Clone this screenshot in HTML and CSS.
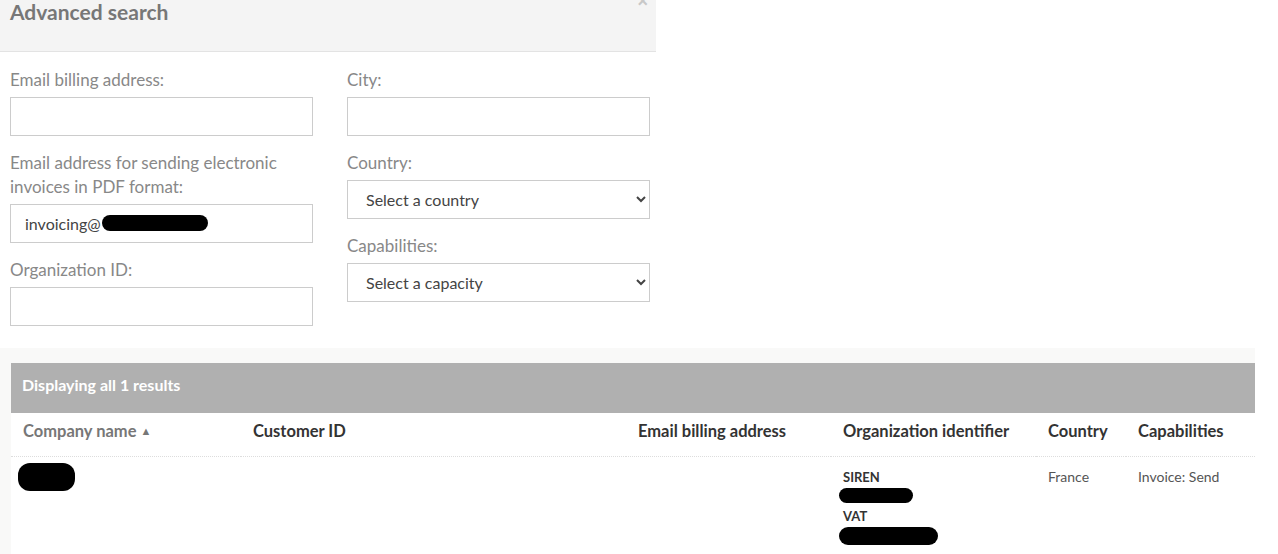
FILE: index.html
```html
<!DOCTYPE html>
<html lang="en">
<head>
    <meta charset="UTF-8">
    <meta name="viewport" content="width=device-width, initial-scale=1.0">
    <title>Advanced search</title>
    <link rel="stylesheet" href="styles.css">
</head>
<body>
    <div class="modal">
        <div class="modal-header">
            <h3>Advanced search</h3>
            <button class="close">&times;</button>
        </div>
        <div class="modal-body">
            <div class="col">
                <div class="form-group">
                    <label for="email-billing">Email billing address:</label>
                    <input type="text" id="email-billing">
                </div>
                <div class="form-group">
                    <label for="email-pdf">Email address for sending electronic invoices in PDF format:</label>
                    <div class="input-wrap">
                        <input type="text" id="email-pdf" value="invoicing@">
                        <span class="redact redact-input"></span>
                    </div>
                </div>
                <div class="form-group">
                    <label for="org-id">Organization ID:</label>
                    <input type="text" id="org-id">
                </div>
            </div>
            <div class="col">
                <div class="form-group">
                    <label for="city">City:</label>
                    <input type="text" id="city">
                </div>
                <div class="form-group">
                    <label for="country">Country:</label>
                    <select id="country">
                        <option>Select a country</option>
                    </select>
                </div>
                <div class="form-group">
                    <label for="capability">Capabilities:</label>
                    <select id="capability">
                        <option>Select a capacity</option>
                    </select>
                </div>
            </div>
        </div>
    </div>

    <div class="results">
        <div class="results-box">
            <div class="results-title">Displaying all 1 results</div>
            <table class="table">
                <thead>
                    <tr>
                        <th class="sorted c-name">Company name <span class="caret">&#9650;</span></th>
                        <th class="c-id">Customer ID</th>
                        <th class="c-email">Email billing address</th>
                        <th class="c-org">Organization identifier</th>
                        <th class="c-country">Country</th>
                        <th class="c-cap">Capabilities</th>
                    </tr>
                </thead>
                <tbody>
                    <tr>
                        <td><span class="redact redact-name"></span></td>
                        <td></td>
                        <td></td>
                        <td>
                            <div class="id-type">SIREN</div>
                            <span class="redact redact-siren"></span>
                            <div class="id-type">VAT</div>
                            <span class="redact redact-vat"></span>
                        </td>
                        <td>France</td>
                        <td>Invoice: Send</td>
                    </tr>
                </tbody>
            </table>
        </div>
    </div>
</body>
</html>
```

FILE: styles.css
```css
body {
    margin: 0;
    font-family: Lato, "Open Sans", sans-serif;
    color: #333;
    background: #fff;
}
.modal {
    width: 656px;
}
.modal-header {
    position: relative;
    height: 52px;
    background-color: #f4f4f4;
    border-bottom: 1px solid #e3e3e3;
    box-sizing: border-box;
}
.modal-header h3 {
    margin: 0;
    padding: 0 0 0 10px;
    font-size: 21px;
    font-weight: bold;
    color: #777;
    line-height: 24px;
}
.close {
    position: absolute;
    top: -9px;
    right: 8px;
    border: none;
    background: none;
    padding: 0;
    font-size: 18px;
    font-weight: bold;
    color: #c8c8c8;
}
.modal-body {
    display: flex;
    gap: 34px;
    padding: 16px 6px 22px 10px;
}
.col {
    width: 303px;
}
.form-group {
    margin-bottom: 15px;
}
.form-group:last-child {
    margin-bottom: 0;
}
.form-group label {
    display: block;
    font-size: 17px;
    line-height: 24px;
    color: #888;
    margin-bottom: 5px;
}
.form-group input, .form-group select {
    width: 100%;
    height: 39px;
    padding: 0 14px;
    box-sizing: border-box;
    border: 1px solid #ccc;
    border-radius: 0;
    background: #fff;
    font-family: inherit;
    font-size: 16px;
    color: #444;
}
.input-wrap {
    position: relative;
}
.redact {
    display: block;
    background: #000;
    border-radius: 12px;
}
.redact-input {
    position: absolute;
    left: 92px;
    top: 11px;
    width: 106px;
    height: 16px;
}
.results {
    background-color: #f9f9f8;
    width: 1255px;
    padding: 15px 0 0 11px;
    box-sizing: border-box;
}
.results-box {
    background: #fff;
}
.results-title {
    background-color: #b0b0b0;
    color: #fff;
    font-weight: bold;
    font-size: 16px;
    height: 50px;
    line-height: 44px;
    padding-left: 11px;
}
.table {
    width: 100%;
    border-collapse: collapse;
}
.table th {
    text-align: left;
    vertical-align: top;
    font-size: 16.5px;
    line-height: 20px;
    color: #333;
    padding: 8px 12px 15px;
    border-bottom: 1px dotted #ddd;
}
.table th.sorted {
    color: #777;
}
.caret {
    font-size: 11px;
    vertical-align: 2px;
}
.table td {
    vertical-align: top;
    padding: 11px 12px 0;
    font-size: 14px;
    line-height: 18px;
    color: #555;
    height: 100px;
    box-sizing: border-box;
}
.c-name { width: 206px; }
.c-id { width: 361px; }
.c-email { width: 181px; }
.c-org { width: 181px; }
.c-country { width: 66px; }
.id-type {
    font-weight: bold;
    font-size: 13px;
    color: #333;
    line-height: 18px;
    margin-top: 4px;
}
.id-type:first-child {
    margin-top: 0;
}
.redact-name {
    width: 57px;
    height: 28px;
    margin: -5px 0 0 -5px;
}
.redact-siren {
    width: 74px;
    height: 15px;
    margin: 2px 0 0 -4px;
}
.redact-vat {
    width: 99px;
    height: 18px;
    margin: 2px 0 0 -4px;
}
```
